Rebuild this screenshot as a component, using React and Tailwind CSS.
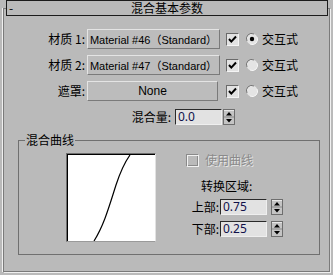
import React from "react";

const Checkbox = ({ checked = true, disabled = false }) => (
  <div
    className={
      "w-[13px] h-[13px] shrink-0 border " +
      (disabled
        ? "border-t-[#8a8a8a] border-l-[#8a8a8a] border-b-[#f2f2f2] border-r-[#f2f2f2] bg-[#bababa] shadow-[inset_1px_1px_0_#f2f2f2,inset_-1px_-1px_0_#8a8a8a]"
        : "border-t-[#6a6a6a] border-l-[#6a6a6a] border-b-[#f4f4f4] border-r-[#f4f4f4] bg-[#e2e2e2]")
    }
  >
    {checked && !disabled && (
      <svg width="11" height="11" viewBox="0 0 11 11">
        <path d="M2 5 L4.3 7.6 L9 2.5" stroke="#000" strokeWidth="2" fill="none" />
      </svg>
    )}
  </div>
);

const Radio = ({ selected }) => (
  <svg width="12" height="12" viewBox="0 0 12 12" className="shrink-0">
    <circle cx="6" cy="6" r="5.5" fill="#e4e4e4" />
    <path d="M1 8 A5.2 5.2 0 0 1 8 1" stroke="#777" strokeWidth="1" fill="none" />
    <path d="M11 4 A5.2 5.2 0 0 1 4 11" stroke="#f6f6f6" strokeWidth="1" fill="none" />
    {selected && <circle cx="6" cy="6" r="2.2" fill="#000" />}
  </svg>
);

const Spinner = () => (
  <svg width="12" height="16" viewBox="0 0 12 16" className="shrink-0">
    <rect x="0.5" y="0.5" width="11" height="15" fill="#c4c4c4" stroke="#6e6e6e" />
    <line x1="1" y1="1.5" x2="11" y2="1.5" stroke="#e8e8e8" />
    <line x1="1" y1="8" x2="11" y2="8" stroke="#8a8a8a" />
    <polygon points="6,3 9,6.5 3,6.5" fill="#000" />
    <polygon points="3,10 9,10 6,13.5" fill="#000" />
  </svg>
);

const Field = ({ value }) => (
  <div className="w-[47px] h-[16px] shrink-0 border border-t-[#2a2a2a] border-l-[#2a2a2a] border-b-[#efefef] border-r-[#efefef] bg-[#e2e2e2] pl-[2px] text-[12px] leading-[14px] text-[#10104a] font-['Noto_Sans',sans-serif]">
    {value}
  </div>
);

const MatButton = ({ children, w }) => (
  <div
    className={
      "h-[20px] shrink-0 border border-t-[#e4e4e4] border-l-[#e4e4e4] border-b-[#7a7a7a] border-r-[#7a7a7a] bg-[#bcbcbc] flex items-center justify-center whitespace-nowrap overflow-hidden text-[11.5px] leading-[14px] font-['Liberation_Sans','Noto_Sans_CJK_SC',sans-serif] " +
      w
    }
  >
    {children}
  </div>
);

const MatText = ({ num }) => (
  <span className="whitespace-nowrap text-[11px]">
    Material #{num}
    <span className="font-['Noto_Sans_CJK_SC',sans-serif] text-[11px]">（</span>
    Standard
    <span className="font-['Noto_Sans_CJK_SC',sans-serif] text-[11px]">）</span>
  </span>
);

const MatRow = ({ label, text, w, radio, bw }) => (
  <div className="flex items-center h-[20px]">
    <div className="w-[83px] pr-[2px] text-right leading-[14px]">{label}</div>
    <MatButton w={w}>{text}</MatButton>
    <div className={bw}>
      <Checkbox />
    </div>
    <div className="ml-[7px] flex items-center">
      <Radio selected={radio} />
    </div>
    <span className="ml-[4px] leading-[14px]">交互式</span>
  </div>
);

export default function App() {
  return (
    <div className="w-[333px] h-[275px] bg-[#bababa] overflow-hidden text-[12px] text-black font-['Noto_Sans_CJK_SC','Noto_Sans',sans-serif]">
      <div className="ml-[6px] w-[322px] h-[16px] border border-[#1c1c1c] bg-[#bababa] relative z-10 grid grid-cols-[20px_1fr_20px] items-center leading-[14px]">
        <span className="pl-[2px]">-</span>
        <span className="text-center">混合基本参数</span>
        <span />
      </div>
      <div className="-mt-[8px] ml-[3px] w-[327px] h-[264px] border border-[#7a7a7a] shadow-[1px_1px_0_#f0f0f0,-1px_0_0_#f0f0f0] pt-[20px]">
        <div className="flex flex-col gap-[6px]">
          <MatRow label="材质 1:" text={<MatText num="46" />} w="w-[133px]" radio bw="ml-[6px]" />
          <MatRow label="材质 2:" text={<MatText num="47" />} w="w-[133px]" radio={false} bw="ml-[6px]" />
          <MatRow label="遮罩:" text={<span className="text-[12px]">None</span>} w="w-[131px]" radio={false} bw="ml-[8px]" />
        </div>
        <div className="mt-[8px] flex items-center h-[16px]">
          <div className="w-[167px] text-right leading-[14px]">混合量:</div>
          <div className="ml-[4px]">
            <Field value="0.0" />
          </div>
          <div className="ml-[1px]">
            <Spinner />
          </div>
        </div>
        <div className="mt-[15px] ml-[14px] w-[302px] h-[115px] border border-[#707070]">
          <div className="-mt-[8px] ml-[6px] px-[1px] w-fit h-[14px] leading-[14px] bg-[#bababa]">混合曲线</div>
          <div className="mt-[6px] flex">
            <div className="ml-[47px] w-[90px] h-[89px] border border-t-[#6e6e6e] border-l-[#6e6e6e] border-b-[#9a9a9a] border-r-[#e2e2e2] shrink-0">
              <div className="w-full h-full border-t border-l border-black bg-white">
                <svg width="87" height="86" viewBox="0 0 87 86">
                  <path d="M26 86 C 36 70 41 52 48 30 C 53 15 57 7 62 0" stroke="#000" strokeWidth="1.2" fill="none" />
                </svg>
              </div>
            </div>
            <div className="ml-[30px] flex flex-col">
              <div className="flex items-center h-[14px]">
                <Checkbox disabled />
                <span className="ml-[6px] leading-[14px] text-[#8a8a8a] [text-shadow:1px_1px_0_#e6e6e6]">使用曲线</span>
              </div>
              <div className="mt-[12px] ml-[15px] h-[14px] leading-[14px]">转换区域:</div>
              <div className="mt-[6px] flex items-center h-[16px]">
                <div className="w-[33px] text-right leading-[14px]">上部:</div>
                <div className="ml-[1px]">
                  <Field value="0.75" />
                </div>
                <div className="ml-[4px]">
                  <Spinner />
                </div>
              </div>
              <div className="mt-[6px] flex items-center h-[16px]">
                <div className="w-[33px] text-right leading-[14px]">下部:</div>
                <div className="ml-[1px]">
                  <Field value="0.25" />
                </div>
                <div className="ml-[4px]">
                  <Spinner />
                </div>
              </div>
            </div>
          </div>
        </div>
      </div>
    </div>
  );
}
